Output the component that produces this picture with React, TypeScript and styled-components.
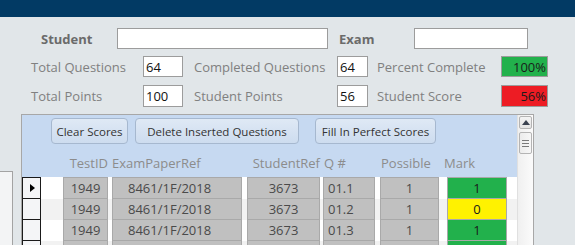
import React from "react";
import styled, { createGlobalStyle } from "styled-components";

const GlobalStyle = createGlobalStyle`
  html, body { margin: 0; padding: 0; }
  body {
    background: #e1e6e9;
    font-family: "Open Sans", "Noto Sans", Arial, sans-serif;
    overflow: hidden;
    width: 575px;
    height: 245px;
  }
  * { box-sizing: border-box; }
`;

const TitleBar = styled.div`
  height: 17px;
  background: #023a64;
`;

const Form = styled.div`
  padding-top: 11px;
  display: flex;
  flex-direction: column;
`;

const FieldRow = styled.div<{ $pl: number; $h: number; $mb: number }>`
  display: flex;
  align-items: center;
  padding-left: ${(p) => p.$pl}px;
  height: ${(p) => p.$h}px;
  margin-bottom: ${(p) => p.$mb}px;
`;

const Label = styled.div<{ $w: number; $ml?: number; $bold?: boolean }>`
  width: ${(p) => p.$w}px;
  margin-left: ${(p) => p.$ml ?? 0}px;
  font-size: 13px;
  font-weight: ${(p) => (p.$bold ? 700 : 400)};
  color: ${(p) => (p.$bold ? "#6b6b6b" : "#808080")};
  white-space: nowrap;
`;

const Field = styled.div<{ $w: number }>`
  width: ${(p) => p.$w}px;
  height: 100%;
  background: #ffffff;
  border: 1px solid #9c9c9c;
  font-size: 13px;
  color: #111;
  padding-left: 2px;
  display: flex;
  align-items: center;
`;

const ScoreBox = styled.div<{ $bg: string }>`
  width: 47px;
  height: 100%;
  background: ${(p) => p.$bg};
  border: 1px solid #9c9c9c;
  font-size: 13px;
  color: #1a1a1a;
  display: flex;
  align-items: center;
  justify-content: flex-end;
  padding-right: 1px;
`;

const Lower = styled.div`
  display: flex;
  align-items: flex-start;
`;

const Stub = styled.div`
  width: 13px;
  height: 80px;
  margin-top: 57px;
  background: #f3f4f5;
  border-top: 1px solid #a3a3a3;
  border-right: 1px solid #a3a3a3;
`;

const Panel = styled.div`
  margin-left: 8px;
  width: 513px;
  height: 140px;
  border: 1px solid #a7a7a7;
  border-bottom: none;
  display: flex;
  background: #ffffff;
  overflow: hidden;
`;

const Main = styled.div`
  width: 495px;
  display: flex;
  flex-direction: column;
  overflow: hidden;
`;

const Header = styled.div`
  flex-shrink: 0;
  height: 62px;
  background: #c6d9f1;
  display: flex;
  flex-direction: column;
`;

const ButtonRow = styled.div`
  display: flex;
  padding: 3px 0 0 29px;
`;

const Button = styled.div<{ $w: number; $ml?: number }>`
  width: ${(p) => p.$w}px;
  margin-left: ${(p) => p.$ml ?? 0}px;
  height: 26px;
  border: 1px solid #a6b8cf;
  border-radius: 4px;
  background: linear-gradient(#dfe9f5, #cddcef);
  font-size: 11.5px;
  color: #333333;
  display: flex;
  align-items: center;
  justify-content: center;
  white-space: nowrap;
`;

const LabelRow = styled.div`
  flex: 1;
  display: flex;
  align-items: flex-end;
  padding: 0 0 5px 41px;
`;

const ColLabel = styled.div<{ $w: number; $ml: number; $align: string; $indent?: number }>`
  width: ${(p) => p.$w}px;
  margin-left: ${(p) => p.$ml}px;
  text-align: ${(p) => p.$align};
  text-indent: ${(p) => p.$indent ?? 0}px;
  font-size: 13px;
  line-height: 18px;
  color: #8c8c8c;
  white-space: nowrap;
`;

const DataRow = styled.div<{ $alt: boolean; $first: boolean }>`
  display: flex;
  flex-shrink: 0;
  height: ${(p) => (p.$first ? 22 : 21)}px;
  background: ${(p) => (p.$alt ? "#f2f2f2" : "#ffffff")};
`;

const Selector = styled.div<{ $first: boolean }>`
  width: 19px;
  height: 100%;
  background: #f4f5f7;
  border-left: 1px solid #1a1a1a;
  border-right: 1px solid #1a1a1a;
  border-bottom: 1px solid #1a1a1a;
  border-top: ${(p) => (p.$first ? "1px solid #1a1a1a" : "none")};
  display: flex;
  align-items: center;
  padding-left: 7px;
`;

const Arrow = styled.div`
  width: 0;
  height: 0;
  border-top: 4px solid transparent;
  border-bottom: 4px solid transparent;
  border-left: 5px solid #000;
`;

const Cell = styled.div<{ $w: number; $ml: number; $align: string; $pad: number; $bg: string; $first: boolean }>`
  width: ${(p) => p.$w}px;
  margin-left: ${(p) => p.$ml}px;
  height: 100%;
  background: ${(p) => p.$bg};
  border: 1px solid #a9a9a9;
  border-top: ${(p) => (p.$first ? "1px solid #a9a9a9" : "none")};
  font-size: 13px;
  color: ${(p) => (p.$bg === "#c0c0c0" ? "#4a4a4a" : "#1a1a1a")};
  display: flex;
  align-items: center;
  justify-content: ${(p) => p.$align};
  padding-left: ${(p) => p.$pad}px;
`;

const Scrollbar = styled.div`
  width: 16px;
  background: linear-gradient(90deg, #f0f0f0, #fbfbfb);
  border-left: 1px solid #e0e0e0;
  display: flex;
  flex-direction: column;
  align-items: center;
  padding-top: 1px;
`;

const ScrollBtn = styled.div`
  width: 13px;
  height: 13px;
  border: 1px solid #b4b4b4;
  border-radius: 2px;
  background: linear-gradient(#f4f4f4, #e3e3e3);
  display: flex;
  align-items: center;
  justify-content: center;
`;

const UpArrow = styled.div`
  width: 0;
  height: 0;
  border-left: 4px solid transparent;
  border-right: 4px solid transparent;
  border-bottom: 5px solid #3a4250;
`;

const Thumb = styled.div`
  margin-top: 3px;
  width: 13px;
  height: 22px;
  border: 1px solid #b4b4b4;
  border-radius: 2px;
  background: linear-gradient(90deg, #ececec, #f7f7f7);
  display: flex;
  flex-direction: column;
  align-items: center;
  justify-content: center;
  gap: 2px;
`;

const Grip = styled.div`
  width: 7px;
  height: 1px;
  background: #7a7a7a;
`;

type Col = { key: string; label: string; w: number; ml: number; align: string; pad: number; hAlign: string; hIndent?: number };

const cols: Col[] = [
  { key: "id", label: "TestID", w: 45, ml: 22, align: "center", pad: 0, hAlign: "right", hIndent: -2 },
  { key: "ref", label: "ExamPaperRef", w: 130, ml: 4, align: "flex-start", pad: 15, hAlign: "left" },
  { key: "stu", label: "StudentRef", w: 73, ml: 5, align: "center", pad: 0, hAlign: "right" },
  { key: "q", label: "Q #", w: 52, ml: 3, align: "flex-start", pad: 4, hAlign: "left", hIndent: 1 },
  { key: "pos", label: "Possible", w: 59, ml: 5, align: "center", pad: 0, hAlign: "left", hIndent: 1 },
  { key: "mark", label: "Mark", w: 60, ml: 8, align: "center", pad: 0, hAlign: "left", hIndent: -3 },
];

type Rec = { id: string; ref: string; stu: string; q: string; pos: string; mark: string; color: string };

const rows: Rec[] = [
  { id: "1949", ref: "8461/1F/2018", stu: "3673", q: "01.1", pos: "1", mark: "1", color: "#22b14c" },
  { id: "1949", ref: "8461/1F/2018", stu: "3673", q: "01.2", pos: "1", mark: "0", color: "#fff200" },
  { id: "1949", ref: "8461/1F/2018", stu: "3673", q: "01.3", pos: "1", mark: "1", color: "#22b14c" },
  { id: "", ref: "", stu: "", q: "", pos: "", mark: "", color: "#22b14c" },
];

export default function App() {
  return (
    <>
      <GlobalStyle />
      <TitleBar />
      <Form>
        <FieldRow $pl={41} $h={21} $mb={7}>
          <Label $w={76} $bold>Student</Label>
          <Field $w={211} />
          <Label $w={75} $ml={11} $bold>Exam</Label>
          <Field $w={114} />
        </FieldRow>
        <FieldRow $pl={31} $h={21} $mb={8}>
          <Label $w={112}>Total Questions</Label>
          <Field $w={40}>64</Field>
          <Label $w={143} $ml={11}>Completed Questions</Label>
          <Field $w={31}>64</Field>
          <Label $w={124} $ml={9}>Percent Complete</Label>
          <ScoreBox $bg="#22b14c">100%</ScoreBox>
        </FieldRow>
        <FieldRow $pl={31} $h={22} $mb={7}>
          <Label $w={112}>Total Points</Label>
          <Field $w={40}>100</Field>
          <Label $w={143} $ml={11}>Student Points</Label>
          <Field $w={31}>56</Field>
          <Label $w={124} $ml={9}>Student Score</Label>
          <ScoreBox $bg="#ed1c24">56%</ScoreBox>
        </FieldRow>
      </Form>
      <Lower>
        <Stub />
        <Panel>
          <Main>
            <Header>
              <ButtonRow>
                <Button $w={77}>Clear Scores</Button>
                <Button $w={164} $ml={7}>Delete Inserted Questions</Button>
                <Button $w={121} $ml={16}>Fill In Perfect Scores</Button>
              </ButtonRow>
              <LabelRow>
                {cols.map((c, i) => (
                  <ColLabel key={c.key} $w={c.w} $ml={i === 0 ? 0 : c.ml} $align={c.hAlign} $indent={c.hIndent}>
                    {c.label}
                  </ColLabel>
                ))}
              </LabelRow>
            </Header>
            {rows.map((r, ri) => (
              <DataRow key={ri} $alt={ri % 2 === 1} $first={ri === 0}>
                <Selector $first={ri === 0}>{ri === 0 && <Arrow />}</Selector>
                {cols.map((c) => (
                  <Cell
                    key={c.key}
                    $w={c.w}
                    $ml={c.ml}
                    $align={c.align}
                    $pad={c.pad}
                    $bg={c.key === "mark" ? r.color : "#c0c0c0"}
                    $first={ri === 0}
                  >
                    {r[c.key as keyof Rec]}
                  </Cell>
                ))}
              </DataRow>
            ))}
          </Main>
          <Scrollbar>
            <ScrollBtn>
              <UpArrow />
            </ScrollBtn>
            <Thumb>
              <Grip />
              <Grip />
              <Grip />
            </Thumb>
          </Scrollbar>
        </Panel>
      </Lower>
    </>
  );
}
